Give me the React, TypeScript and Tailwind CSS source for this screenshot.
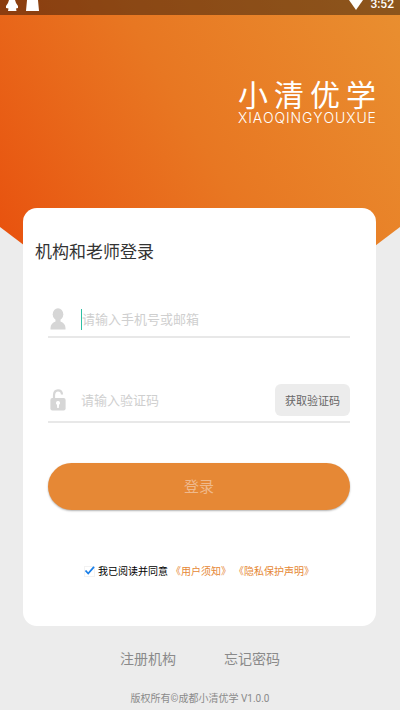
import { useState } from "react";

const LOGO_CHARS = ["小", "清", "优", "学"];

function StatusBar() {
  return (
    <div className="flex h-[15px] items-start justify-between overflow-hidden bg-black/40 px-[6px] text-white">
      <div className="flex gap-2">
        <svg width="12" height="12" viewBox="0 0 12 12" fill="currentColor" aria-hidden="true">
          <path d="M3 0h6l1 3 2 3v2l-2 .5.500 2.500H2l.5-2.500L0 8V6l2-3z" />
        </svg>
        <svg width="13" height="11" viewBox="0 0 13 11" fill="currentColor" aria-hidden="true">
          <path d="M1 0h11l1 11H0z" />
        </svg>
      </div>
      <div className="flex gap-[6px]">
        <svg width="16" height="10" viewBox="0 0 16 10" fill="currentColor" aria-hidden="true">
          <path d="M1 0h14L8 10z" />
        </svg>
        <span className="font-[Roboto] text-[12px] font-medium leading-2">3:52</span>
      </div>
    </div>
  );
}

function Logo() {
  return (
    <div className="ml-auto mr-6 mt-[62px] w-[138px] text-white">
      <div className="flex justify-between text-[30px] leading-8">
        {LOGO_CHARS.map((char) => (
          <span key={char}>{char}</span>
        ))}
      </div>
      <div className="flex justify-between font-[Inter] text-[14px] font-light leading-[18px]">
        {"XIAOQINGYOUXUE".split("").map((letter, i) => (
          <span key={i}>{letter}</span>
        ))}
      </div>
    </div>
  );
}

function UserIcon() {
  return (
    <svg className="shrink-0 text-[#d6d6d6]" width="16" height="22" viewBox="0 0 16 22" fill="currentColor" aria-hidden="true">
      <ellipse cx="8" cy="6.300" rx="5.300" ry="6" />
      <path d="M5.500 11h5v2.500c3 1 5 3.500 5 6.500v1.500H.5V20c0-3 2-5.500 5-6.500z" />
    </svg>
  );
}

function LockIcon() {
  return (
    <svg className="shrink-0 text-[#d6d6d6]" width="16" height="22" viewBox="0 0 16 22" aria-hidden="true">
      <path d="M4 10V6.500C4 3.200 5.500 1.400 8 1.400c2.300 0 3.900 1.500 4 4.100" fill="none" stroke="currentColor" strokeWidth="2.200" />
      <rect x=".4" y="9" width="15.200" height="12.500" rx="2" fill="currentColor" />
      <path d="M8 12a2 2 0 0 1 1.100 3.700L8.800 19H7.200l-.3-3.300A2 2 0 0 1 8 12z" fill="#fff" />
    </svg>
  );
}

export default function App() {
  const [account, setAccount] = useState("");
  const [code, setCode] = useState("");
  const [agreed, setAgreed] = useState(true);

  return (
    <div className="min-h-screen bg-[#ececec] font-['Noto_Sans_CJK_SC',sans-serif]">
      <header className="h-[280px] bg-linear-60 from-[#e84e0c] via-[#e87722] to-[#e98f30] [clip-path:polygon(0_0,100%_0,100%_227px,calc(100%_-_70px)_280px,70px_280px,0_227px)]">
        <StatusBar />
        <Logo />
      </header>

      <main className="relative -mt-[72px] ml-[23px] mr-6 rounded-[14px] bg-white pb-[45px] pt-[30px]">
        <h1 className="px-3 text-[17px] leading-[26px] text-[#333]">机构和老师登录</h1>

        <form className="pl-[25px] pr-[26px]" onSubmit={(e) => e.preventDefault()}>
          <div className="mt-[38px] flex h-9 items-center border-b-2 border-[#e8e8e8] pl-[2px]">
            <UserIcon />
            <span className="ml-[15px] h-[21px] w-px shrink-0 bg-[#2fbfa4]" />
            <input
              type="text"
              aria-label="手机号或邮箱"
              placeholder="请输入手机号或邮箱"
              value={account}
              onChange={(e) => setAccount(e.target.value)}
              className="min-w-0 flex-1 text-[13px] leading-5 text-[#333] outline-none placeholder:text-[#cfcfcf]"
            />
          </div>

          <div className="mt-[41px] flex h-11 items-center border-b-2 border-[#e8e8e8] pl-[2px]">
            <LockIcon />
            <input
              type="text"
              aria-label="验证码"
              placeholder="请输入验证码"
              value={code}
              onChange={(e) => setCode(e.target.value)}
              className="ml-[15px] min-w-0 flex-1 text-[13px] leading-5 text-[#333] outline-none placeholder:text-[#cfcfcf]"
            />
            <button
              type="button"
              className="h-8 w-[75px] shrink-0 rounded-md bg-[#ececec] text-[11px] text-[#666]"
            >
              获取验证码
            </button>
          </div>

          <button
            type="submit"
            className="mt-10 h-[47px] w-full rounded-full bg-[#e68835] text-[15px] text-[#efb98c] shadow-[0_1px_2px_rgba(0,0,0,0.3)]"
          >
            登录
          </button>

          <div className="mt-[51px] flex h-5 items-center justify-center gap-[3px] text-[10px] leading-5">
            <label className="flex items-center gap-[3px] text-black">
              <span className="grid size-[11px] place-items-center">
                <input
                  type="checkbox"
                  checked={agreed}
                  onChange={(e) => setAgreed(e.target.checked)}
                  className="col-start-1 row-start-1 size-[11px] appearance-none border border-[#f2f2f2] bg-white"
                />
                {agreed && (
                  <svg className="pointer-events-none col-start-1 row-start-1" width="11" height="11" viewBox="0 0 11 11" aria-hidden="true">
                    <path d="M1.500 4.500l2.700 3L10 .8" fill="none" stroke="#1a7fe8" strokeWidth="1.800" />
                  </svg>
                )}
              </span>
              我已阅读并同意
            </label>
            <a href="#terms" className="text-[#e68835]">《用户须知》</a>
            <a href="#privacy" className="text-[#e68835]">《隐私保护声明》</a>
          </div>
        </form>
      </main>

      <footer className="text-center text-[#8a8a8a]">
        <nav className="mt-[22px] flex justify-center gap-12 text-[14px] leading-5">
          <a href="#register">注册机构</a>
          <a href="#forgot">忘记密码</a>
        </nav>
        <p className="mt-[21px] font-[Roboto,'Noto_Sans_CJK_SC',sans-serif] text-[10px] leading-5">
          版权所有©成都小清优学 V1.0.0
        </p>
      </footer>
    </div>
  );
}
